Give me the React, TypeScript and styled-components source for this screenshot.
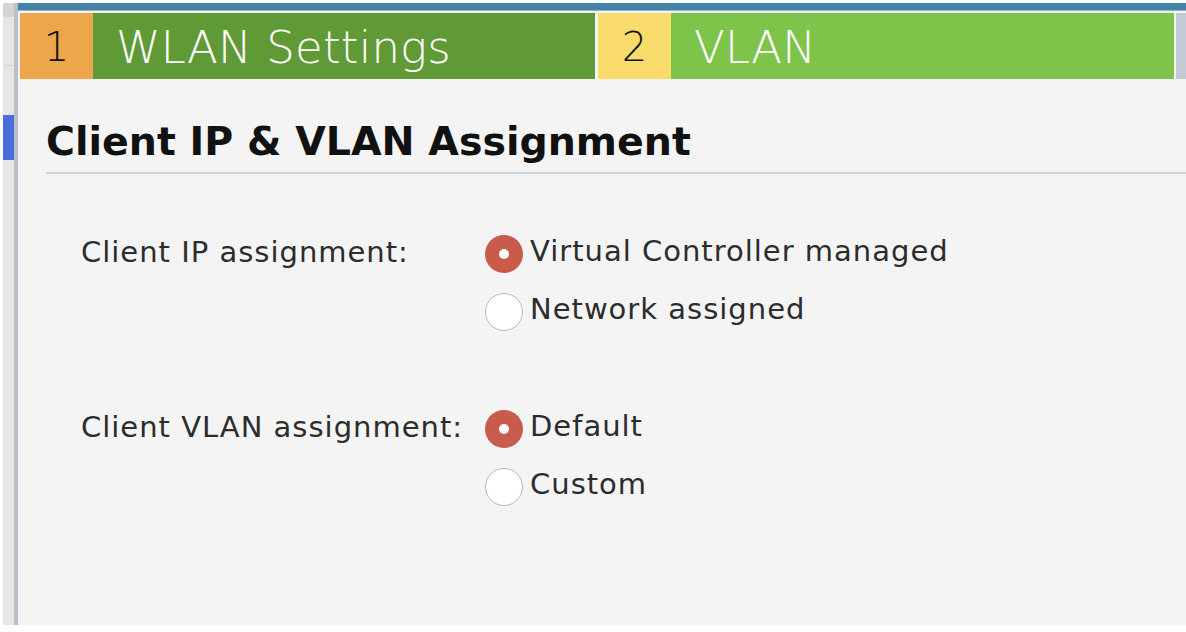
import React from "react";
import styled, { createGlobalStyle } from "styled-components";

const Global = createGlobalStyle`
  html, body { margin: 0; padding: 0; background: #ffffff; }
  body { font-family: "DejaVu Sans", Verdana, sans-serif; }
`;

const Frame = styled.div`
  width: 1186px;
  height: 632px;
  padding: 3px 0 7px 3px;
  box-sizing: border-box;
  display: flex;
  overflow: hidden;
`;

const SideStrip = styled.div`
  width: 13px;
  display: flex;
  flex-direction: column;
  background: #e6e6e5;
  border-right: 4px solid #b7bfca;
`;

const SideCell = styled.div<{ $h: number; $bg: string; $line?: boolean }>`
  height: ${(p) => p.$h}px;
  background: ${(p) => p.$bg};
  border-bottom: ${(p) => (p.$line ? "1px solid #cdd5de" : "none")};
  box-sizing: border-box;
`;

const Main = styled.div`
  flex: 1;
  display: flex;
  flex-direction: column;
  background: #f4f4f4;
`;

const TopBar = styled.div`
  height: 7px;
  background: #4383a5;
  border-bottom: 1px solid #8fb6cc;
`;

const Tabs = styled.div`
  display: flex;
  height: 66px;
  margin: 2px 0 0 2px;
  gap: 3px;
`;

const Tab = styled.div<{ $w: number }>`
  display: flex;
  width: ${(p) => p.$w}px;
`;

const TabNum = styled.div<{ $bg: string }>`
  width: 73px;
  background: ${(p) => p.$bg};
  color: #111;
  font-size: 40px;
  font-weight: 300;
  display: flex;
  align-items: center;
  justify-content: center;
  line-height: 1;
  padding-top: 2px;
  box-sizing: border-box;
`;

const TabLabel = styled.div<{ $bg: string }>`
  flex: 1;
  background: ${(p) => p.$bg};
  color: #ffffff;
  font-size: 45px;
  font-weight: 200;
  letter-spacing: 0.2px;
  display: flex;
  align-items: center;
  padding-left: 23px;
  line-height: 1;
  padding-top: 2px;
`;

const TabTail = styled.div`
  width: 10px;
  background: #c4c9d6;
  margin-left: -1px;
`;

const Content = styled.div`
  padding: 40px 0 0 28px;
  display: flex;
  flex-direction: column;
`;

const Heading = styled.h2`
  margin: 0;
  font-size: 39.5px;
  font-weight: 700;
  color: #111;
  line-height: 44px;
  padding-bottom: 9px;
  border-bottom: 2px solid #cdd4de;
`;

const Form = styled.div`
  display: flex;
  flex-direction: column;
  gap: 77px;
  padding: 59px 0 0 35px;
`;

const FieldRow = styled.div`
  display: flex;
  align-items: flex-start;
`;

const FieldLabel = styled.div`
  width: 404px;
  font-size: 29px;
  letter-spacing: 1px;
  color: #2c2c2c;
  line-height: 38px;
`;

const Options = styled.div`
  display: flex;
  flex-direction: column;
  gap: 18px;
`;

const Option = styled.label`
  display: flex;
  align-items: flex-start;
  gap: 7px;
  font-size: 29px;
  letter-spacing: 1px;
  color: #2c2c2c;
  line-height: 36px;
`;

const Radio = styled.span<{ $on: boolean }>`
  width: 38px;
  height: 38px;
  margin-top: 2px;
  border-radius: 50%;
  box-sizing: border-box;
  flex-shrink: 0;
  background: ${(p) => (p.$on ? "#c85b4b" : "#ffffff")};
  border: ${(p) => (p.$on ? "none" : "1.5px solid #b8b8b8")};
  display: flex;
  align-items: center;
  justify-content: center;
  &::after {
    content: "";
    width: 10px;
    height: 10px;
    border-radius: 50%;
    background: #ffffff;
    display: ${(p) => (p.$on ? "block" : "none")};
  }
`;

const fields = [
  {
    label: "Client IP assignment:",
    options: ["Virtual Controller managed", "Network assigned"],
  },
  {
    label: "Client VLAN assignment:",
    options: ["Default", "Custom"],
  },
];

export default function App() {
  return (
    <>
      <Global />
      <Frame>
        <SideStrip>
          <SideCell $h={14} $bg="#d4d4d4" $line />
          <SideCell $h={49} $bg="#e6e6e5" $line />
          <SideCell $h={49} $bg="#e6e6e5" />
          <SideCell $h={45} $bg="#4a6ed9" />
          <SideCell $h={465} $bg="#e6e6e5" />
        </SideStrip>
        <Main>
          <TopBar />
          <Tabs>
            <Tab $w={575}>
              <TabNum $bg="#eea64b">1</TabNum>
              <TabLabel $bg="#5f9a37">WLAN Settings</TabLabel>
            </Tab>
            <Tab $w={576}>
              <TabNum $bg="#f8db6a">2</TabNum>
              <TabLabel $bg="#7ec44a">VLAN</TabLabel>
            </Tab>
            <TabTail />
          </Tabs>
          <Content>
            <Heading>Client IP &amp; VLAN Assignment</Heading>
            <Form>
              {fields.map((f) => (
                <FieldRow key={f.label}>
                  <FieldLabel>{f.label}</FieldLabel>
                  <Options>
                    {f.options.map((o, i) => (
                      <Option key={o}>
                        <Radio $on={i === 0} />
                        {o}
                      </Option>
                    ))}
                  </Options>
                </FieldRow>
              ))}
            </Form>
          </Content>
        </Main>
      </Frame>
    </>
  );
}
